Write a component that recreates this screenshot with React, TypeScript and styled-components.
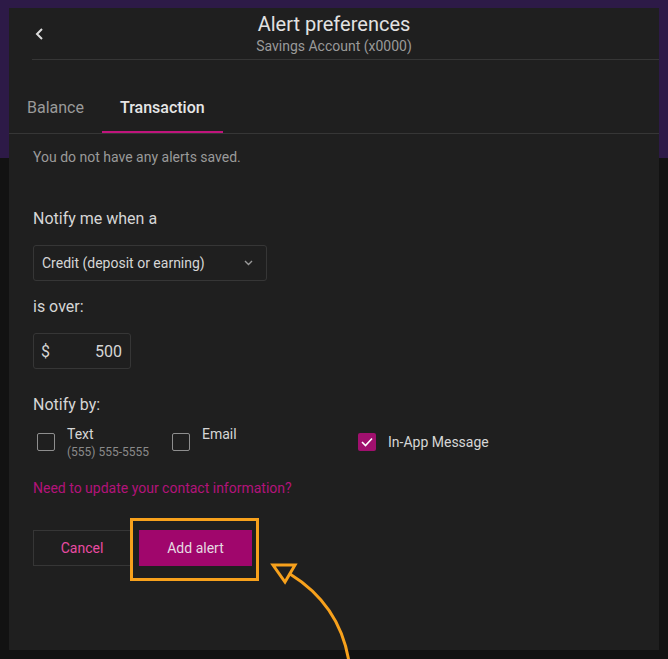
import React from "react";
import styled, { createGlobalStyle } from "styled-components";

const Global = createGlobalStyle`
  html, body { margin: 0; padding: 0; background: #121212; }
  body { font-family: Roboto, "Liberation Sans", Arial, sans-serif; }
  * { box-sizing: border-box; }
`;

const Page = styled.div`
  position: relative;
  width: 668px;
  height: 659px;
  overflow: hidden;
  background: linear-gradient(to bottom, #2d1a47 0, #2d1a47 158px, #121212 158px);
  padding: 8px 9px 0 9px;
`;

const Panel = styled.div`
  width: 650px;
  height: 642px;
  background: #1f1f1f;
  display: flex;
  flex-direction: column;
`;

const Header = styled.div`
  display: grid;
  grid-template-columns: 48px 1fr 48px;
  align-items: center;
  padding-top: 4px;
`;

const BackButton = styled.button`
  background: none;
  border: 0;
  padding: 0;
  margin-left: 24px;
  margin-top: -4px;
  width: 12px;
  height: 14px;
  display: flex;
  align-items: center;
  justify-content: center;
  cursor: pointer;
`;

const TitleBlock = styled.div`
  text-align: center;
`;

const Title = styled.div`
  font-size: 20px;
  line-height: 24px;
  color: #e2e2e2;
`;

const Subtitle = styled.div`
  font-size: 14px;
  line-height: 20px;
  color: #9a9a9a;
  padding-bottom: 3px;
`;

const Divider = styled.div`
  margin-left: 23px;
  height: 1px;
  background: #363636;
`;

const Tabs = styled.div`
  margin-top: 25px;
  display: flex;
  border-bottom: 1px solid #363636;
`;

const Tab = styled.div<{ $active?: boolean }>`
  height: 48px;
  padding: 0 18px 2px;
  display: flex;
  align-items: center;
  font-size: 16px;
  font-weight: ${(p) => (p.$active ? 500 : 400)};
  color: ${(p) => (p.$active ? "#e6e6e6" : "#9a9a9a")};
  border-bottom: 2px solid ${(p) => (p.$active ? "#c0147c" : "transparent")};
`;

const Content = styled.div`
  padding: 0 24px;
  display: flex;
  flex-direction: column;
  align-items: flex-start;
`;

const Empty = styled.div`
  margin-top: 13px;
  font-size: 14px;
  line-height: 20px;
  color: #9a9a9a;
`;

const Label = styled.div<{ $mt: number }>`
  margin-top: ${(p) => p.$mt}px;
  font-size: 16px;
  line-height: 24px;
  color: #d6d6d6;
`;

const Select = styled.div`
  margin-top: 14px;
  width: 234px;
  height: 36px;
  border: 1px solid #363636;
  border-radius: 3px;
  display: flex;
  align-items: center;
  justify-content: space-between;
  padding: 0 13px 0 8px;
  font-size: 14px;
  color: #d6d6d6;
`;

const Amount = styled.div`
  margin-top: 14px;
  width: 98px;
  height: 36px;
  border: 1px solid #363636;
  border-radius: 3px;
  display: flex;
  align-items: center;
  justify-content: space-between;
  padding: 0 8px 0 7px;
  font-size: 16px;
  color: #d6d6d6;
`;

const Options = styled.div`
  margin-top: 7px;
  margin-left: 4px;
  display: grid;
  grid-template-columns: 135px 186px auto;
  align-items: center;
`;

const Option = styled.div`
  display: flex;
  align-items: center;
  gap: 12px;
`;

const Box = styled.div<{ $checked?: boolean }>`
  width: 18px;
  height: 18px;
  border-radius: 2px;
  border: ${(p) => (p.$checked ? "0" : "1.5px solid #8e8e8e")};
  background: ${(p) => (p.$checked ? "#a0106e" : "transparent")};
  display: flex;
  align-items: center;
  justify-content: center;
  flex: none;
`;

const OptionText = styled.div`
  display: flex;
  flex-direction: column;
`;

const OptionLabel = styled.div`
  font-size: 14px;
  line-height: 20px;
  color: #d6d6d6;
`;

const OptionSub = styled.div`
  font-size: 12px;
  line-height: 16px;
  height: 16px;
  color: #8a8a8a;
`;

const Link = styled.a`
  margin-top: 18px;
  font-size: 14px;
  line-height: 20px;
  color: #b3137a;
  text-decoration: none;
`;

const Buttons = styled.div`
  margin-top: 32px;
  display: flex;
  gap: 8px;
`;

const Button = styled.button<{ $primary?: boolean }>`
  height: 36px;
  width: ${(p) => (p.$primary ? 113 : 98)}px;
  border: ${(p) => (p.$primary ? "0" : "1px solid #363636")};
  background: ${(p) => (p.$primary ? "#a0066c" : "transparent")};
  color: ${(p) => (p.$primary ? "#e6dbe2" : "#ea4ba3")};
  font-family: Roboto, "Liberation Sans", Arial, sans-serif;
  font-size: 14px;
  border-radius: 0;
  cursor: pointer;
`;

const Annotation = styled.svg`
  position: absolute;
  left: 0;
  top: 0;
  pointer-events: none;
`;

export default function App() {
  return (
    <>
      <Global />
      <Page>
        <Panel>
          <Header>
            <BackButton aria-label="Back">
              <svg width="9" height="12" viewBox="0 0 9 12">
                <polyline points="7,1 2,6 7,11" fill="none" stroke="#dcdcdc" strokeWidth="2" />
              </svg>
            </BackButton>
            <TitleBlock>
              <Title>Alert preferences</Title>
              <Subtitle>Savings Account (x0000)</Subtitle>
            </TitleBlock>
            <div />
          </Header>
          <Divider />
          <Tabs>
            <Tab>Balance</Tab>
            <Tab $active>Transaction</Tab>
          </Tabs>
          <Content>
            <Empty>You do not have any alerts saved.</Empty>
            <Label $mt={40}>Notify me when a</Label>
            <Select>
              <span>Credit (deposit or earning)</span>
              <svg width="9" height="6" viewBox="0 0 9 6">
                <polyline points="1,1 4.5,4.5 8,1" fill="none" stroke="#9a9a9a" strokeWidth="1.4" />
              </svg>
            </Select>
            <Label $mt={14}>is over:</Label>
            <Amount>
              <span>$</span>
              <span>500</span>
            </Amount>
            <Label $mt={24}>Notify by:</Label>
            <Options>
              <Option>
                <Box />
                <OptionText>
                  <OptionLabel>Text</OptionLabel>
                  <OptionSub>(555) 555-5555</OptionSub>
                </OptionText>
              </Option>
              <Option>
                <Box />
                <OptionText>
                  <OptionLabel>Email</OptionLabel>
                  <OptionSub />
                </OptionText>
              </Option>
              <Option>
                <Box $checked>
                  <svg width="12" height="10" viewBox="0 0 12 10">
                    <polyline points="1,5 4.5,8.5 11,1.5" fill="none" stroke="#ffffff" strokeWidth="1.6" />
                  </svg>
                </Box>
                <OptionLabel>In-App Message</OptionLabel>
              </Option>
            </Options>
            <Link href="#">Need to update your contact information?</Link>
            <Buttons>
              <Button>Cancel</Button>
              <Button $primary>Add alert</Button>
            </Buttons>
          </Content>
        </Panel>
        <Annotation width="668" height="659" viewBox="0 0 668 659">
          <rect x="131.5" y="519.5" width="126" height="60" fill="none" stroke="#f7a11c" strokeWidth="3" />
          <polygon points="273,565 295,565 285,582" fill="none" stroke="#f7a11c" strokeWidth="3" strokeLinejoin="miter" />
          <path d="M290 574 Q 340 605 349 662" fill="none" stroke="#f7a11c" strokeWidth="3" />
        </Annotation>
      </Page>
    </>
  );
}
